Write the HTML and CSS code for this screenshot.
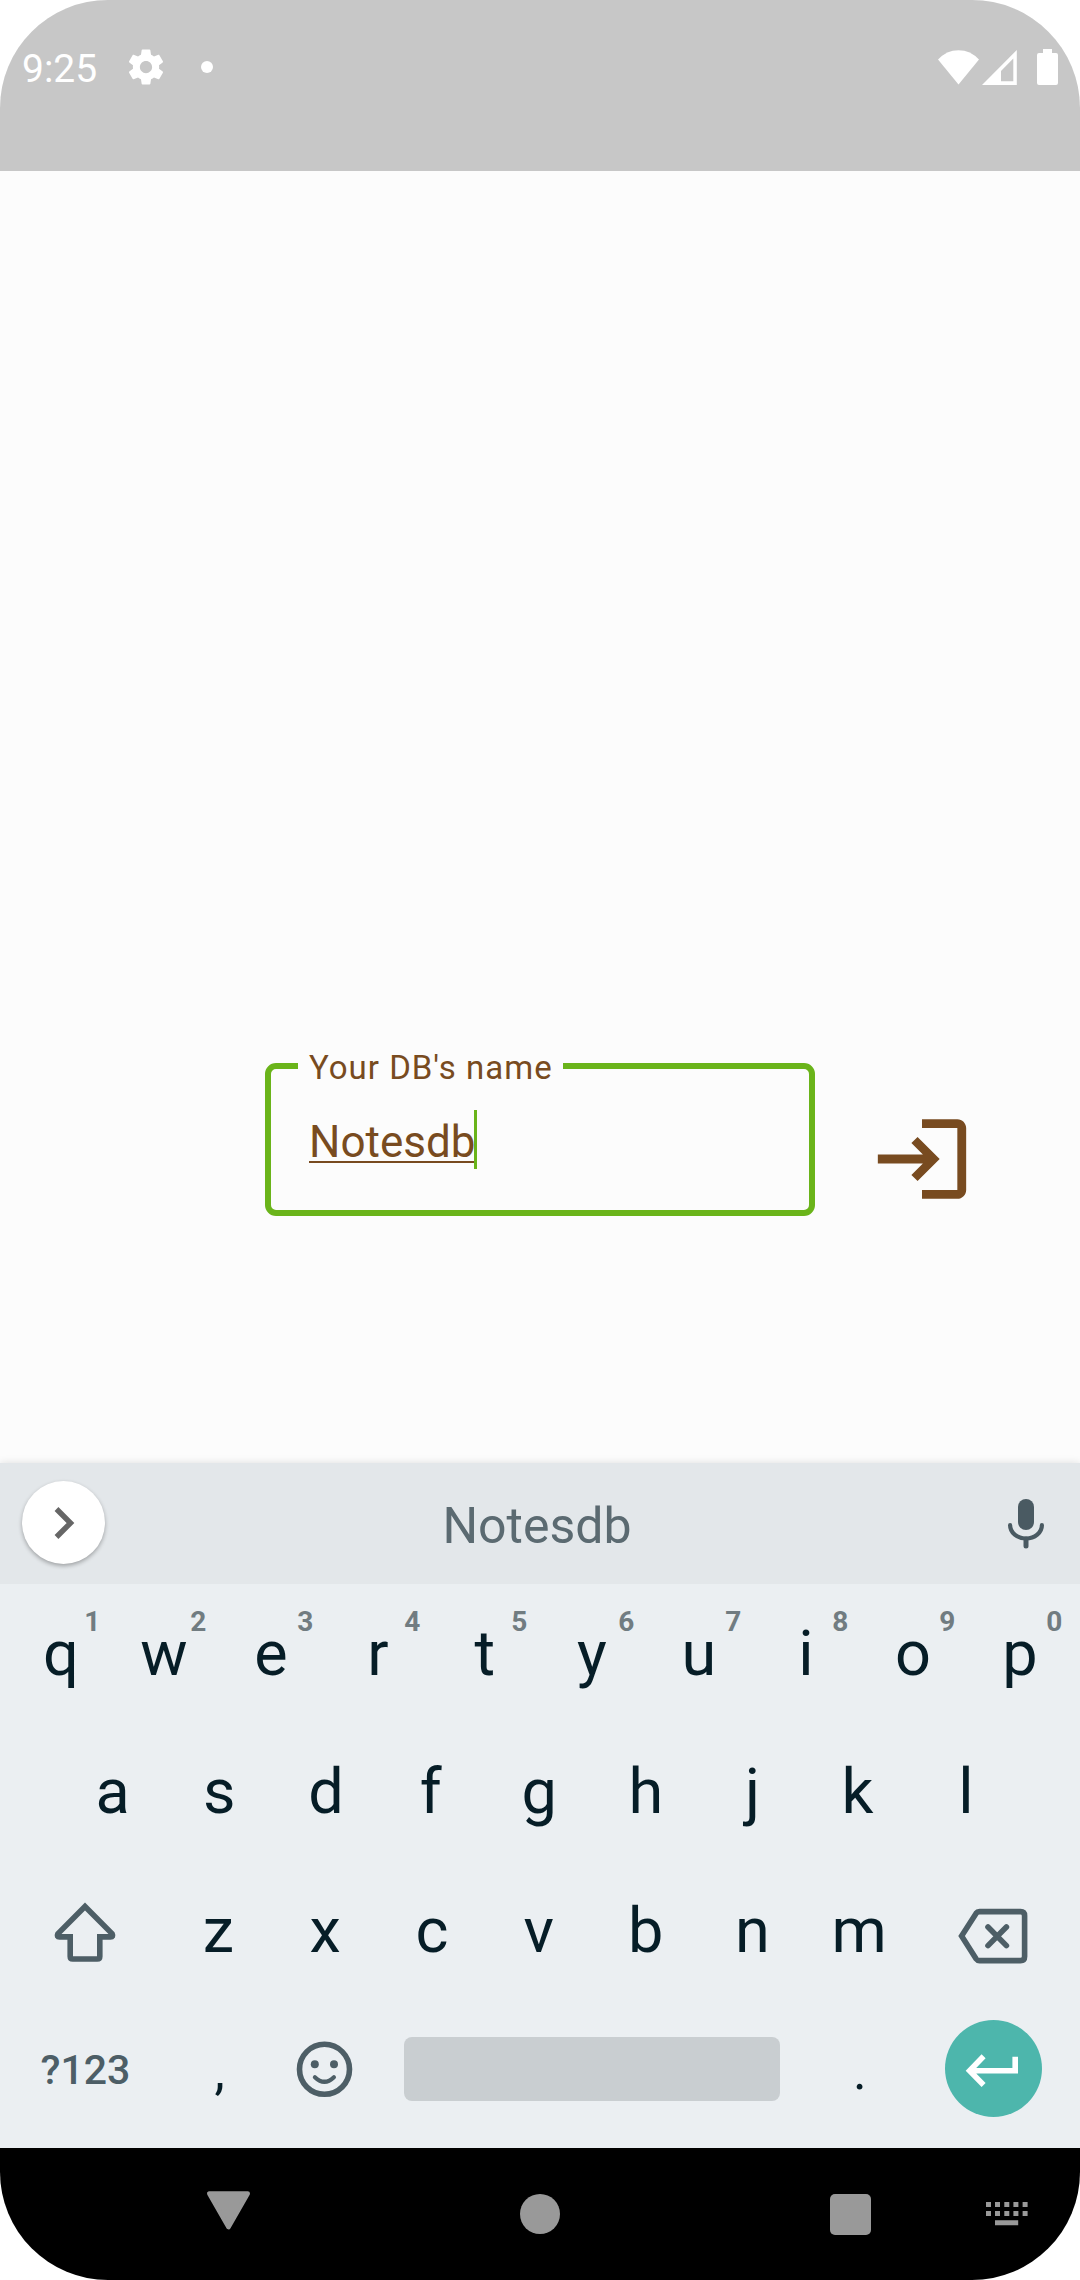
FILE: index.html
```html
<!DOCTYPE html>
<html lang="en">
<head>
<meta charset="utf-8">
<title>Notes</title>
<link rel="stylesheet" href="styles.css">
</head>
<body>
<div class="screen">
  <header class="status">
    <span class="time">9:25</span>
    <svg class="gear" width="42" height="42" viewBox="0 0 24 24"><path fill="#fff" d="M19.43 12.98c.04-.32.07-.64.07-.98s-.03-.66-.07-.98l2.11-1.65c.19-.15.24-.42.12-.64l-2-3.46c-.12-.22-.39-.3-.61-.22l-2.49 1c-.52-.4-1.08-.73-1.69-.98l-.38-2.65C14.46 2.18 14.25 2 14 2h-4c-.25 0-.46.18-.49.42l-.38 2.65c-.61.25-1.17.59-1.69.98l-2.49-1c-.23-.09-.49 0-.61.22l-2 3.46c-.13.22-.07.49.12.64l2.11 1.65c-.04.32-.07.65-.07.98s.03.66.07.98l-2.11 1.65c-.19.15-.24.42-.12.64l2 3.46c.12.22.39.3.61.22l2.49-1c.52.4 1.08.73 1.69.98l.38 2.65c.03.24.24.42.49.42h4c.25 0 .46-.18.49-.42l.38-2.65c.61-.25 1.17-.59 1.69-.98l2.49 1c.23.09.49 0 .61-.22l2-3.46c.12-.22.07-.49-.12-.64l-2.11-1.65zM12 15.5c-1.93 0-3.5-1.57-3.5-3.5s1.57-3.5 3.5-3.5 3.5 1.57 3.5 3.5-1.57 3.5-3.5 3.5z"/></svg>
    <span class="dot"></span>
    <div class="indicators">
      <svg width="41" height="37" viewBox="0 0 41 37"><path fill="#fff" d="M0 10.6Q8.5 1.2 20.5 1.2T41 10.6L20.5 35.4z"/></svg>
      <svg width="35" height="37" viewBox="0 0 35 37"><path fill="#fff" fill-rule="evenodd" d="M0 36H34.8V1zM19 32.2V22L31.3 9.6V32.2z"/></svg>
      <svg class="battery" width="21" height="37" viewBox="0 0 21 37"><path fill="#fff" d="M6 0H15V4H19Q21 4 21 6V34Q21 36 19 36H2Q0 36 0 34V6Q0 4 2 4H6z"/></svg>
    </div>
  </header>

  <main class="content">
    <fieldset class="field">
      <legend class="label">Your DB's name</legend>
      <div class="input"><span class="value">Notesdb</span><span class="caret"></span></div>
    </fieldset>
    <svg class="login" width="106" height="106" viewBox="0 0 24 24"><path fill="#784b20" d="M11 7L9.6 8.4l2.6 2.6H2v2h10.2l-2.6 2.6L11 17l5-5-5-5zm9 12h-8v2h8c1.1 0 2-.9 2-2V5c0-1.1-.9-2-2-2h-8v2h8v14z"/></svg>
  </main>

  <section class="keyboard">
    <div class="suggestions">
      <span class="expand"><svg width="24" height="36" viewBox="0 0 24 36"><path d="M4.5 4L18.5 18L4.5 32" fill="none" stroke="#666" stroke-width="5.4"/></svg></span>
      <span class="word">Notesdb</span>
      <svg class="mic" width="48" height="60" viewBox="0 0 48 60"><rect x="16" y="5" width="16" height="31" rx="8" fill="#4a5a62"/><path d="M8.1 31.2A15.9 13.3 0 0 0 39.9 31.2" fill="none" stroke="#4a5a62" stroke-width="4.2" stroke-linecap="round"/><path d="M24 45V52" stroke="#4a5a62" stroke-width="5" stroke-linecap="round"/></svg>
    </div>
    <div class="keys">
      <div class="row top">
        <span class="key edge">q<sup>1</sup></span><span class="key">w<sup>2</sup></span><span class="key">e<sup>3</sup></span><span class="key">r<sup>4</sup></span><span class="key">t<sup>5</sup></span><span class="key">y<sup>6</sup></span><span class="key">u<sup>7</sup></span><span class="key">i<sup>8</sup></span><span class="key">o<sup>9</sup></span><span class="key">p<sup>0</sup></span>
      </div>
      <div class="row home">
        <span class="key">a</span><span class="key">s</span><span class="key">d</span><span class="key nudge">f</span><span class="key">g</span><span class="key">h</span><span class="key">j</span><span class="key nudge">k</span><span class="key">l</span>
      </div>
      <div class="row lower">
        <span class="key shift"><svg width="70" height="70" viewBox="0 0 70 70"><path d="M35 11.5L7.8 38.9Q6.3 41.9 9.5 41.9H20.2V61.5Q20.2 64 22.7 64H47.3Q49.8 64 49.8 61.5V41.9H60.5Q63.7 41.9 62.2 38.9Z" fill="none" stroke="#4d5e66" stroke-width="5.6"/></svg></span>
        <span class="key">z</span><span class="key">x</span><span class="key">c</span><span class="key">v</span><span class="key">b</span><span class="key">n</span><span class="key">m</span>
        <span class="key delete"><svg width="80" height="70" viewBox="0 0 80 70"><g fill="none" stroke="#4d5e66" stroke-width="5.6"><path d="M22.5 16.6H63.5Q67.6 16.6 67.6 20.7V61.5Q67.6 65.6 63.5 65.6H22.5Q20.3 65.6 19.2 64L4.6 41.1L19.2 18.2Q20.3 16.6 22.5 16.6Z"/><path d="M31 32L49.4 50.6M49.4 32L31 50.6" stroke-linecap="round"/></g></svg></span>
      </div>
      <div class="row bottom">
        <span class="key symbols">?123</span>
        <span class="key mark">,</span>
        <span class="key"><svg width="58" height="58" viewBox="0 0 58 58"><circle cx="28.5" cy="29.3" r="25" fill="none" stroke="#4d5e66" stroke-width="5.6"/><circle cx="18.8" cy="24.2" r="4" fill="#4d5e66"/><circle cx="38" cy="24.2" r="4" fill="#4d5e66"/><path d="M18.9 37.2Q28.4 46.4 37.9 37.2" fill="none" stroke="#4d5e66" stroke-width="4.2" stroke-linecap="round"/></svg></span>
        <span class="key"><span class="space"></span></span>
        <span class="key mark">.</span>
        <span class="key last"><span class="enter"><svg width="97" height="97" viewBox="0 0 97 97"><path d="M38.6 36.3L24.6 50.7L38.6 65M26 50.7H70.2V36.7" fill="none" stroke="#fff" stroke-width="5.6"/></svg></span></span>
      </div>
    </div>
  </section>

  <nav class="navbar">
    <svg class="back" width="46" height="40" viewBox="0 0 46 40"><path d="M3.3 2.5H41.7L22.5 36Z" fill="#999" stroke="#999" stroke-width="4.6" stroke-linejoin="round"/></svg>
    <span class="home-button"></span>
    <span class="recents"></span>
    <svg class="switcher" width="42" height="24" viewBox="0 0 42 24"><path fill="#999" d="M0 0h5v5H0zM9 0h5v5H9zM18.3 0h5v5h-5zM27.4 0h5v5h-5zM36.6 0h5v5h-5zM0 9h5v5H0zM9 9h5v5H9zM18.3 9h5v5h-5zM27.4 9h5v5h-5zM36.6 9h5v5h-5zM9 18.3h23.2v4.9H9z"/></svg>
  </nav>
</div>
</body>
</html>
```
FILE: styles.css
```css
body {
  margin: 0;
  background: #fff;
  font-family: Roboto, sans-serif;
}

svg {
  display: block;
  flex: none;
}

.screen {
  display: flex;
  flex-direction: column;
  width: 1080px;
  height: 2280px;
  overflow: hidden;
  border-radius: 108px;
  background: #fcfcfc;
}

/* Status bar */
.status {
  display: flex;
  align-items: center;
  box-sizing: border-box;
  height: 171px;
  padding: 0 22px 37px;
  background: #c7c7c7;
  color: #fff;
}

.time {
  width: 103px;
  padding-top: 4px;
  font-size: 39px;
}

.dot {
  width: 12px;
  height: 12px;
  margin-left: 34px;
  border-radius: 50%;
  background: #fff;
}

.indicators {
  display: flex;
  gap: 3px;
  margin-left: auto;
}

.battery {
  margin-left: 17px;
}

/* Database name form */
.content {
  display: flex;
  align-items: flex-start;
  box-sizing: border-box;
  height: 1292px;
  padding: 876px 0 0 265px;
  color: #784b20;
}

.field {
  box-sizing: border-box;
  width: 550px;
  height: 169px;
  margin: 0;
  padding: 0 27px;
  border: 6px solid #6ab41a;
  border-radius: 11px;
}

.label {
  box-sizing: border-box;
  width: 265px;
  height: 38px;
  padding: 0 0 0 11px;
  font-size: 33px;
  line-height: 42px;
  letter-spacing: 1px;
  white-space: nowrap;
}

.input {
  display: flex;
  height: 59px;
  margin: 25px 0 0 11px;
}

.value {
  font-size: 44px;
  line-height: 64px;
  text-decoration: underline;
  text-decoration-thickness: 2px;
  text-decoration-skip-ink: none;
  text-underline-offset: 4px;
}

.caret {
  width: 3px;
  margin-left: -1px;
  background: #6ab41a;
}

.login {
  margin: 59px 0 0 54px;
}

/* Keyboard */
.keyboard {
  height: 685px;
  background: #ebeff2;
  box-shadow: 0 0 8px rgba(0, 0, 0, 0.12);
}

.suggestions {
  display: grid;
  grid-template-columns: 83px 1fr 48px;
  align-items: center;
  justify-items: center;
  box-sizing: border-box;
  height: 121px;
  padding: 0 30px 0 22px;
  background: #e3e7ea;
}

.expand {
  display: flex;
  align-items: center;
  justify-content: center;
  width: 83px;
  height: 83px;
  margin-bottom: 2px;
  border-radius: 50%;
  background: #fff;
  box-shadow: 0 2px 4px rgba(0, 0, 0, 0.3);
}

.word {
  padding: 5px 33px 0 0;
  color: #5b6a71;
  font-size: 50px;
}

.row {
  display: grid;
  height: 138.5px;
}

.top {
  grid-template-columns: repeat(10, 107px);
  padding-left: 3.4px;
}

.home {
  grid-template-columns: repeat(9, 106.7px);
  padding-left: 59.2px;
}

.lower {
  grid-template-columns: 165px repeat(7, 106.8px) 167px;
}

.bottom {
  grid-template-columns: 166px 106px 106px 427.6px 107.6px 166px;
}

.key {
  position: relative;
  display: flex;
  align-items: center;
  justify-content: center;
  color: #061d27;
  font-size: 63px;
}

.edge {
  padding-left: 4px;
  margin-right: -4px;
}

.edge sup {
  margin-right: 3px;
}

.nudge {
  padding-right: 4px;
}

.shift {
  padding-left: 5px;
}

.delete {
  padding-left: 2px;
}

.last {
  padding-right: 6px;
}

/* Digit hint in the corner of a letter key */
.key sup {
  position: absolute;
  top: 22px;
  right: 11px;
  color: #717c81;
  font-size: 28px;
  font-weight: 700;
  line-height: 32px;
}

.symbols {
  padding: 2px 0 0 5px;
  color: #4d5e66;
  font-size: 41px;
  font-weight: 500;
}

.mark {
  padding: 6px 0 0 1px;
  font-size: 52px;
}

.space {
  width: 376px;
  height: 64px;
  border-radius: 8px;
  background: #c9ced1;
}

.enter {
  width: 97px;
  height: 97px;
  border-radius: 50%;
  background: #4db6ac;
}

/* System navigation */
.navbar {
  display: flex;
  align-items: center;
  box-sizing: border-box;
  height: 132px;
  padding-left: 206px;
  background: #000;
}

.back {
  margin-bottom: 6px;
}

.home-button {
  width: 40px;
  height: 40px;
  margin-left: 268px;
  border-radius: 50%;
  background: #999;
}

.recents {
  width: 41px;
  height: 41px;
  margin-left: 270px;
  border-radius: 5px;
  background: #999;
}

.switcher {
  margin-left: 115px;
}
```
